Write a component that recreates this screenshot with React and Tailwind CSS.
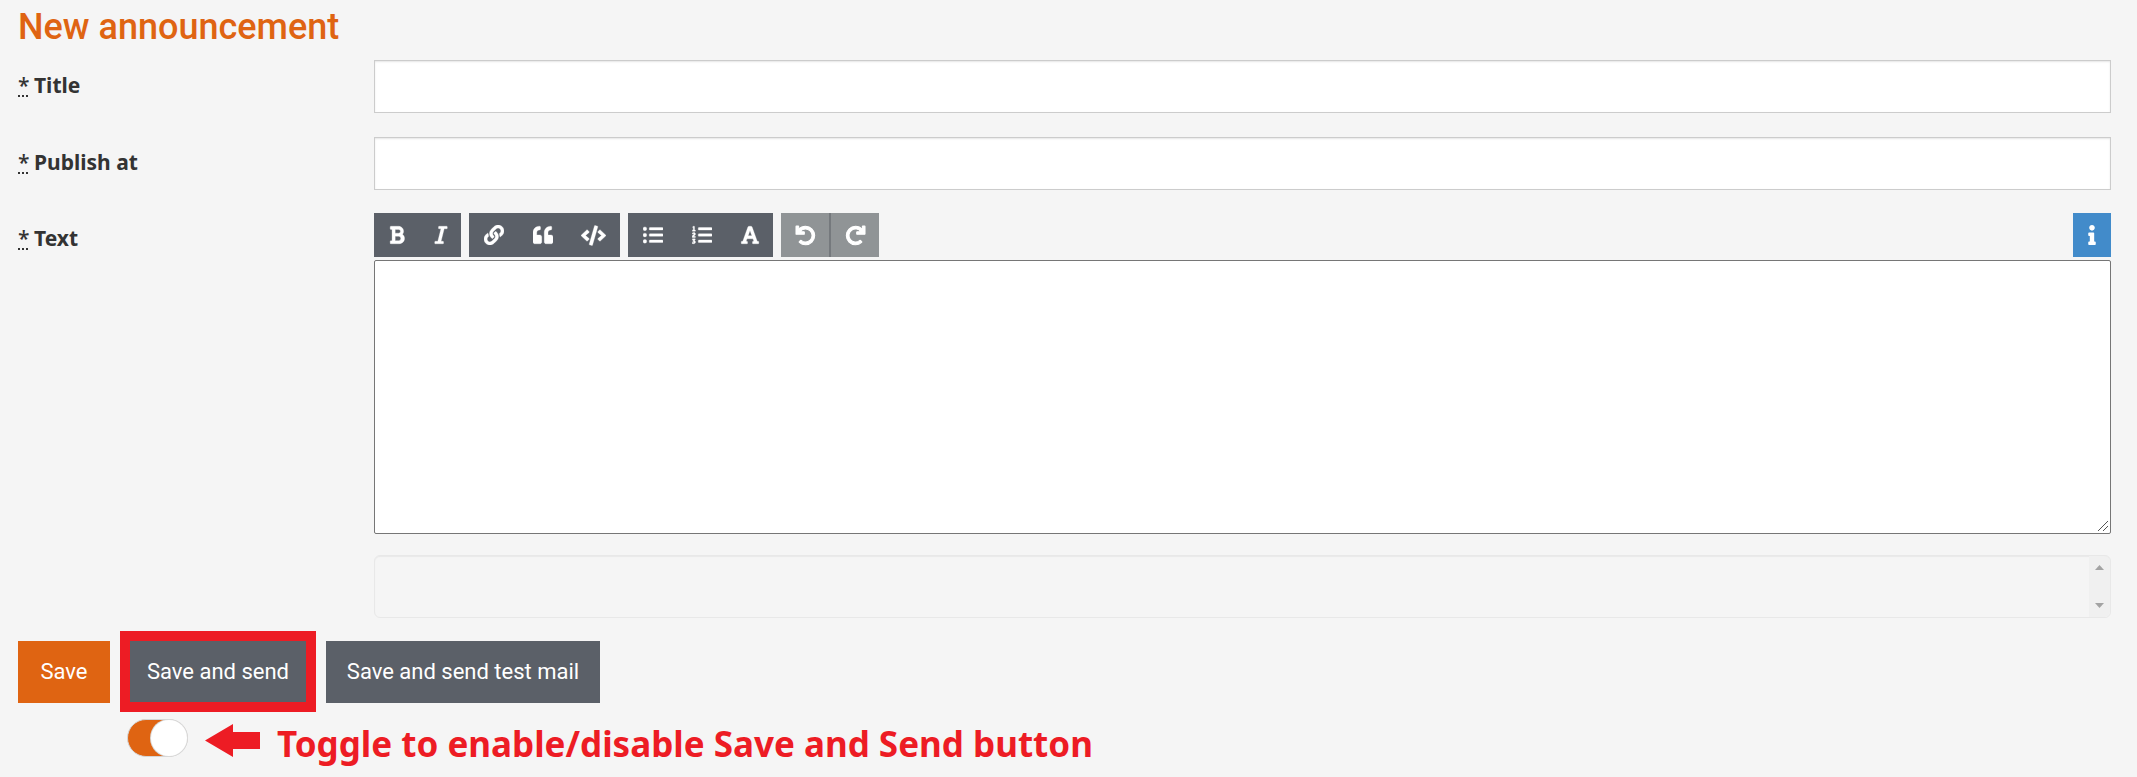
import {
  FaBold, FaItalic, FaLink, FaQuoteLeft, FaCode, FaListUl, FaListOl, FaFont, FaUndo, FaRedo, FaInfo,
} from "react-icons/fa";

const groups = [
  [
    { label: "Bold", Icon: FaBold, width: "w-[46px]" },
    { label: "Italic", Icon: FaItalic, width: "w-[41px]" },
  ],
  [
    { label: "Link", Icon: FaLink, width: "w-[50px]" },
    { label: "Quote", Icon: FaQuoteLeft, width: "w-12" },
    { label: "Code", Icon: FaCode, width: "w-[53px]", size: 25 },
  ],
  [
    { label: "Bulleted list", Icon: FaListUl, width: "w-[50px]" },
    { label: "Numbered list", Icon: FaListOl, width: "w-12" },
    { label: "Heading", Icon: FaFont, width: "w-[47px]" },
  ],
];

const history = [
  { label: "Undo", Icon: FaUndo },
  { label: "Redo", Icon: FaRedo },
];

function FieldLabel({ htmlFor, children }) {
  return (
    <label htmlFor={htmlFor} className="flex items-start gap-[6px] self-start pt-[9px] text-[21px] leading-8 font-bold">
      <abbr title="required" className="h-7 w-[10px] border-b-2 border-dotted border-[#333333] text-center font-medium no-underline">*</abbr>
      <span>{children}</span>
    </label>
  );
}

function TextField({ id, label }) {
  return (
    <div className="grid grid-cols-[356px_1fr]">
      <FieldLabel htmlFor={id}>{label}</FieldLabel>
      <input
        id={id}
        type="text"
        required
        className="h-[53px] w-full border border-[#cccccc] bg-white px-4 text-xl shadow-[inset_0_1px_2px_rgba(0,0,0,0.1)] outline-none"
      />
    </div>
  );
}

function Toolbar() {
  return (
    <div className="flex justify-between text-xl text-white">
      <div className="flex gap-2">
        {groups.map((group) => (
          <div key={group[0].label} className="flex bg-[#5b6068]">
            {group.map(({ label, Icon, width, size }) => (
              <button key={label} type="button" aria-label={label} className={"flex h-11 items-center justify-center " + width}>
                <Icon size={size} strokeWidth={8} />
              </button>
            ))}
          </div>
        ))}
        <div className="flex gap-[2px] bg-[#75797d]">
          {history.map(({ label, Icon }) => (
            <button key={label} type="button" disabled aria-label={label} className="flex h-11 w-12 items-center justify-center bg-[#909496]">
              <Icon size={19} strokeWidth={28} overflow="visible" />
            </button>
          ))}
        </div>
      </div>
      <button type="button" aria-label="Formatting help" className="flex h-11 w-[38px] items-center justify-center bg-[#428bca]">
        <FaInfo />
      </button>
    </div>
  );
}

function Editor() {
  return (
    <div className="relative mt-[3px]">
      <textarea id="text" required className="block h-[274px] w-full resize-none rounded-[2px] border border-[#767676] bg-white p-2 text-xl outline-none" />
      <svg width="12" height="12" viewBox="0 0 12 12" fill="none" stroke="#555555" className="pointer-events-none absolute right-[2px] bottom-[2px]">
        <path d="M1 11L11 1M6 11L11 6" />
      </svg>
    </div>
  );
}

function Preview() {
  return (
    <div className="mt-[21px] flex h-[63px] justify-end rounded-md border border-[#e8e8e8] shadow-[inset_0_1px_1px_rgba(0,0,0,0.05)]">
      <div className="flex w-[21px] flex-col items-center justify-between rounded-r-md bg-[#f0f0f0] py-[9px]">
        <svg width="9" height="5" viewBox="0 0 9 5" fill="#a3a3a3"><path d="M0 5L4.500 0L9 5Z" /></svg>
        <svg width="9" height="5" viewBox="0 0 9 5" fill="#a3a3a3"><path d="M0 0L4.500 5L9 0Z" /></svg>
      </div>
    </div>
  );
}

export default function App() {
  return (
    <main className="min-h-screen bg-[#f5f5f5] pr-[26px] pl-[18px] font-['Noto_Sans','Open_Sans',sans-serif] text-[#333333]">
      <h1 className="pt-[5px] pb-[11px] font-['Roboto',sans-serif] text-4xl leading-[44px] font-medium text-[#df6412]">New announcement</h1>
      <form>
        <div className="flex flex-col gap-6">
          <TextField id="title" label="Title" />
          <TextField id="publish-at" label="Publish at" />
          <div className="-mt-px grid grid-cols-[356px_1fr]">
            <FieldLabel htmlFor="text">Text</FieldLabel>
            <div>
              <Toolbar />
              <Editor />
              <Preview />
            </div>
          </div>
        </div>

        <div className="mt-[13px] flex items-start gap-[10px] font-['Roboto',sans-serif] text-[22px] leading-[62px] text-white">
          <button type="submit" className="mt-[10px] h-[62px] w-[92px] bg-[#df6412]">Save</button>
          <button type="submit" className="h-[81px] w-[196px] border-10 border-[#ed1c24] bg-[#5b6068]">Save and send</button>
          <button type="submit" className="mt-[10px] h-[62px] w-[274px] bg-[#5b6068]">Save and send test mail</button>
        </div>

        <div className="mt-[7px] ml-[109px] flex items-start">
          <input
            id="enable-send"
            type="checkbox"
            defaultChecked
            className="flex h-[38px] w-[61px] shrink-0 appearance-none justify-start rounded-full border border-[#d5d5d5] bg-[#df6412] before:size-9 before:rounded-full before:bg-white before:shadow-[0_0_0_1px_#d9d9d9] before:content-[''] checked:justify-end"
          />
          <svg width="55" height="33" viewBox="0 0 55 33" fill="#ed1c24" className="mt-[5px] ml-[17px] shrink-0">
            <path d="M0 16.500L28 0V8H55V25H28V33Z" />
          </svg>
          <label htmlFor="enable-send" className="mt-[7px] ml-[17px] text-[35px] leading-9 font-bold whitespace-nowrap text-[#ed1c24]">
            Toggle to enable/disable Save and Send button
          </label>
        </div>
      </form>
    </main>
  );
}
